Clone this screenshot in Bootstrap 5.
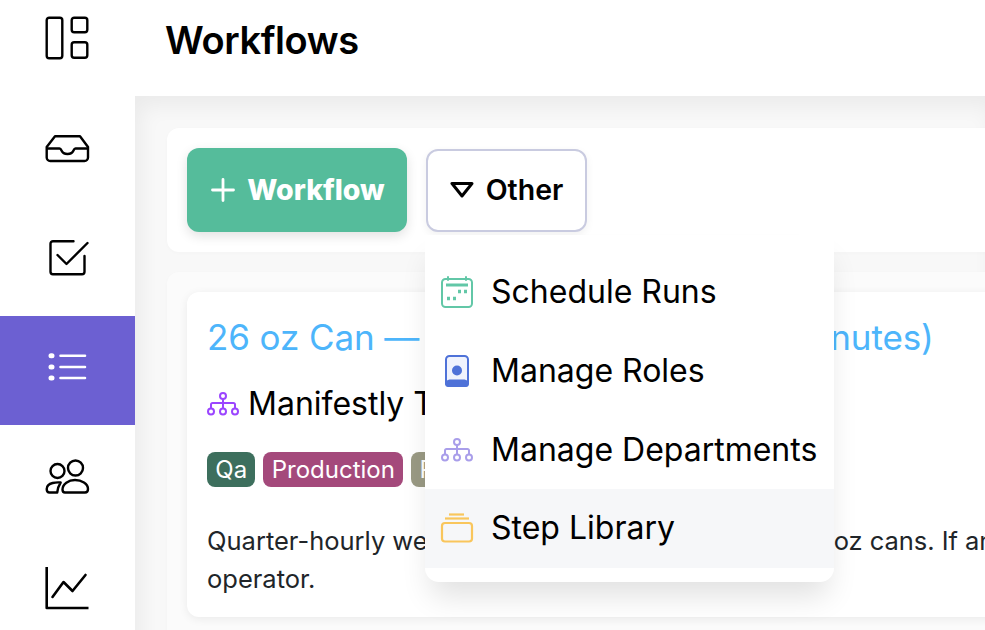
<!DOCTYPE html>
<html lang="en">
<head>
<meta charset="utf-8">
<title>Workflows</title>
<link href="https://cdn.jsdelivr.net/npm/bootstrap@5.3.0/dist/css/bootstrap.min.css" rel="stylesheet">
<style>
html,body{height:630px;overflow:hidden}
body{font-family:Inter,"Liberation Sans",sans-serif;background:#fff;color:#000}
.shell{width:985px;height:630px;overflow:hidden}
.siderail{width:135px;height:630px;flex:none;background:#fff;position:relative;z-index:3}
.railcell{height:109px;flex:none;padding-top:27px;color:#000}
.railcell.first{height:98px;padding-top:16px}
.railcell.active-cell{background:#6c60d2;color:#fff}
.railcell svg{width:48px;height:48px;display:block;overflow:visible}
.stage{min-width:0;width:850px}
.topstrip{height:96px;flex:none;padding-left:30px;background:#fff;position:relative;z-index:2}
.topstrip h1{font-size:38px;font-weight:600;margin:0;line-height:1;letter-spacing:-.4px;padding-bottom:16px}
.canvas{background:#f8f8f8;box-shadow:inset 6px 10px 20px rgba(0,0,0,.055);padding:32px 0 0 32px;flex:1;width:850px}
.panel{background:#fff;border-radius:12px 0 0 12px;width:900px;box-shadow:0 1px 4px rgba(0,0,0,.02)}
.toolbar{height:124px;padding:20px;margin-bottom:20px;gap:19px;position:relative;z-index:1}
.btn.addbtn{width:220px;height:84px;background:#55bc9b;border:0;border-radius:12px;color:#fff;font-size:28.500px;font-weight:800;box-shadow:0 4px 12px rgba(0,0,0,.12);gap:12px;padding:0 0 0 2px}
.btn.otherbtn{width:161px;height:83px;background:#fff;border:2px solid #c9cbe0;border-radius:12px;color:#000;font-size:28.500px;font-weight:600;gap:12px;padding:0;box-shadow:0 3px 8px rgba(0,0,0,.06)}
.otherwrap{position:relative}
.dropdown-menu.flowmenu{display:block;position:absolute;left:-1px;top:86px;width:409px;margin:0;padding:17px 0 14px;border:0;border-radius:0 0 14px 14px;box-shadow:0 20px 30px -6px rgba(0,0,0,.12);z-index:5}
.flowmenu .dropdown-item{height:79px;padding:1px 0 0 16px;font-size:32px;color:#000;gap:18px}
.flowmenu .dropdown-item.hovered{background:#f6f7f9;padding-top:0}
.flowmenu svg{width:32px;height:32px;flex:none;overflow:visible}
.listwrap{padding:20px;height:400px;background:#fbfbfb}
.wfcard{background:#fff;border-radius:12px;padding:24px 20px;height:325px;width:860px;box-shadow:0 2px 10px rgba(0,0,0,.07)}
.wftitle{font-size:35px;font-weight:400;color:#4db5fb;line-height:42px;margin:0 0 24px;white-space:nowrap;letter-spacing:-.1px}
.deptline{font-size:32px;line-height:40px;gap:9px;margin-bottom:28px;color:#000;padding-top:2px}
.deptline svg{width:32px;height:32px;overflow:visible}
.chips{gap:8px;margin-bottom:35px}
.chip{font-size:24px;line-height:35px;border-radius:8px;padding:0 8.300px;color:#fff}
.qa-chip{background:#3d6f5d}
.prod-chip{background:#a4497b}
.plant-chip{background:#9a9a84}
.wfdesc{font-size:25.500px;line-height:38px;color:#212529;margin:0;white-space:nowrap;word-spacing:-.2px}
</style>
</head>
<body>
<div class="shell d-flex">
  <nav class="siderail d-flex flex-column align-items-center">
    <div class="railcell first w-100 d-flex justify-content-center"><svg viewBox="0 0 48 48" fill="none" stroke="currentColor" stroke-width="2.400"><rect x="2.700" y="1.700" width="15.600" height="40.600" rx="2.500"/><rect x="27.700" y="1.700" width="15.600" height="14.600" rx="2.500"/><rect x="27.700" y="26.200" width="15.600" height="15.600" rx="2.500"/></svg></div>
    <div class="railcell w-100 d-flex justify-content-center"><svg viewBox="0 0 48 48" fill="none" stroke="currentColor" stroke-width="2.400" stroke-linejoin="round"><path d="M2.700 22 11 11.200h25L44 22v10.500a3.500 3.500 0 0 1-3.500 3.500H6.200a3.500 3.500 0 0 1-3.500-3.500z"/><path d="M2.700 23.500H15.500c1 0 1.500 .8 2 2 .8 2 3 3.500 6 3.500s5.200-1.500 6-3.500c.5-1.200 1-2 2-2H44"/></svg></div>
    <div class="railcell w-100 d-flex justify-content-center"><svg viewBox="0 0 48 48" fill="none" stroke="currentColor" stroke-width="2.400" stroke-linecap="round" stroke-linejoin="round"><path d="M29.500 7.200H9a2.500 2.500 0 0 0-2.500 2.500v28A2.500 2.500 0 0 0 9 40.200h29a2.500 2.500 0 0 0 2.500-2.500V22"/><path d="M13.500 21l9 9L43.500 9"/></svg></div>
    <div class="railcell active-cell w-100 d-flex justify-content-center"><svg viewBox="0 0 48 48" fill="none" stroke="currentColor" stroke-width="2.600" stroke-linecap="round"><path d="M16.500 12.700h24.500M16.500 24h24.500M16.500 35h24.500"/><path d="M7 12.700h1M7 24h1M7 35h1" stroke-width="5"/></svg></div>
    <div class="railcell w-100 d-flex justify-content-center"><svg viewBox="0 0 48 48" fill="none" stroke="currentColor" stroke-width="2.400" stroke-linejoin="round"><circle cx="13.500" cy="19" r="7"/><circle cx="31.500" cy="16" r="7.500"/><path d="M2.700 37c0-2.500 2-5 6-6 2-.500 6-.7 8-.5-2 3-3 6-3.500 10H5.500c-2 0-2.800-1.500-2.800-3.500z"/><path d="M18.500 37.500c0-5.500 6-9.500 12.500-9.500s13 3.500 13 9c0 2.200-1 3.500-3 3.500H21c-1.700 0-2.500-1.200-2.500-3z"/></svg></div>
    <div class="railcell w-100 d-flex justify-content-center"><svg viewBox="0 0 48 48" fill="none" stroke="currentColor" stroke-width="2.600" stroke-linejoin="round" stroke-linecap="round"><path d="M2.700 6v41h41.800" stroke-linecap="butt"/><path d="M8.500 36l11-15 9 9L41.500 14"/></svg></div>
  </nav>
  <div class="stage d-flex flex-column">
    <header class="topstrip d-flex align-items-center"><h1>Workflows</h1></header>
    <main class="canvas">
      <div class="panel toolbar d-flex align-items-center">
        <button class="btn addbtn d-flex align-items-center justify-content-center" type="button"><svg width="24" height="24" viewBox="0 0 24 24" fill="none" stroke="#fff" stroke-width="2.800" stroke-linecap="round"><path d="M12 1.500v21M1.500 12h21"/></svg>Workflow</button>
        <div class="otherwrap">
          <button class="btn otherbtn d-flex align-items-center justify-content-center" type="button"><svg width="24" height="18" viewBox="0 0 24 18" fill="none" stroke="#000" stroke-width="3" stroke-linejoin="round"><path d="M2 2.500h20L12 15z"/></svg>Other</button>
          <div class="dropdown-menu flowmenu">
            <a class="dropdown-item d-flex align-items-center" href="#"><svg viewBox="0 0 32 32" fill="none" stroke="#62c7a7" stroke-width="2"><rect x="1" y="3" width="30" height="28" rx="3.500"/><path d="M7 1v3M25 1v3" stroke-linecap="round"/><path d="M5 9h22" stroke-width="3"/><path d="M17 15.500h3M23 15.500h3M6 22.500h3M12 22.500h3" stroke-width="3.400"/></svg>Schedule Runs</a>
            <a class="dropdown-item d-flex align-items-center" href="#"><svg viewBox="0 0 32 32"><rect x="5" y="1" width="22" height="30" rx="3.500" fill="#f0f3fd" stroke="#4f72d8" stroke-width="2"/><path d="M4 28.500V27c2-2 4-2.500 6-2.500h12c2 0 4 .5 6 2.500v1.500a3.500 3.500 0 0 1-3.500 3.500h-17A3.500 3.500 0 0 1 4 28.500z" fill="#4f72d8"/><circle cx="16" cy="15.500" r="5" fill="#4f72d8"/></svg>Manage Roles</a>
            <a class="dropdown-item d-flex align-items-center" href="#"><svg viewBox="0 0 32 32" fill="none" stroke="#a99eea" stroke-width="2"><circle cx="16" cy="8" r="3"/><path d="M16 11v4M4 20v-3.500a1.500 1.500 0 0 1 1.500-1.500h21a1.500 1.500 0 0 1 1.500 1.500V20M16 15v5"/><circle cx="4" cy="23.500" r="3"/><circle cx="16" cy="23.500" r="3"/><circle cx="28" cy="23.500" r="3"/></svg>Manage Departments</a>
            <a class="dropdown-item hovered d-flex align-items-center" href="#"><svg viewBox="0 0 32 32" fill="none" stroke="#f9c65c" stroke-width="2.200"><rect x="1" y="11" width="30" height="18.500" rx="3"/><path d="M4 6.500h24"/><path d="M8 2.500h15"/></svg>Step Library</a>
          </div>
        </div>
      </div>
      <div class="panel listwrap">
        <article class="wfcard">
          <h2 class="wftitle">26 oz Can — Weight Check (Per 15 minutes)</h2>
          <div class="deptline d-flex align-items-center"><svg viewBox="0 0 32 32" fill="none" stroke="#9b45ff" stroke-width="2"><circle cx="16" cy="8" r="3"/><path d="M16 11v4M4 20v-3.500a1.500 1.500 0 0 1 1.500-1.500h21a1.500 1.500 0 0 1 1.500 1.500V20M16 15v5"/><circle cx="4" cy="23.500" r="3"/><circle cx="16" cy="23.500" r="3"/><circle cx="28" cy="23.500" r="3"/></svg><span>Manifestly Team</span></div>
          <div class="chips d-flex"><span class="chip qa-chip">Qa</span><span class="chip prod-chip">Production</span><span class="chip plant-chip">Plant</span></div>
          <p class="wfdesc">Quarter-hourly weight check of filled and sealed 26 oz cans. If any are out of spec, notify the line<br>operator.</p>
        </article>
      </div>
    </main>
  </div>
</div>
<script src="https://cdn.jsdelivr.net/npm/bootstrap@5.3.0/dist/js/bootstrap.bundle.min.js"></script>
</body>
</html>
